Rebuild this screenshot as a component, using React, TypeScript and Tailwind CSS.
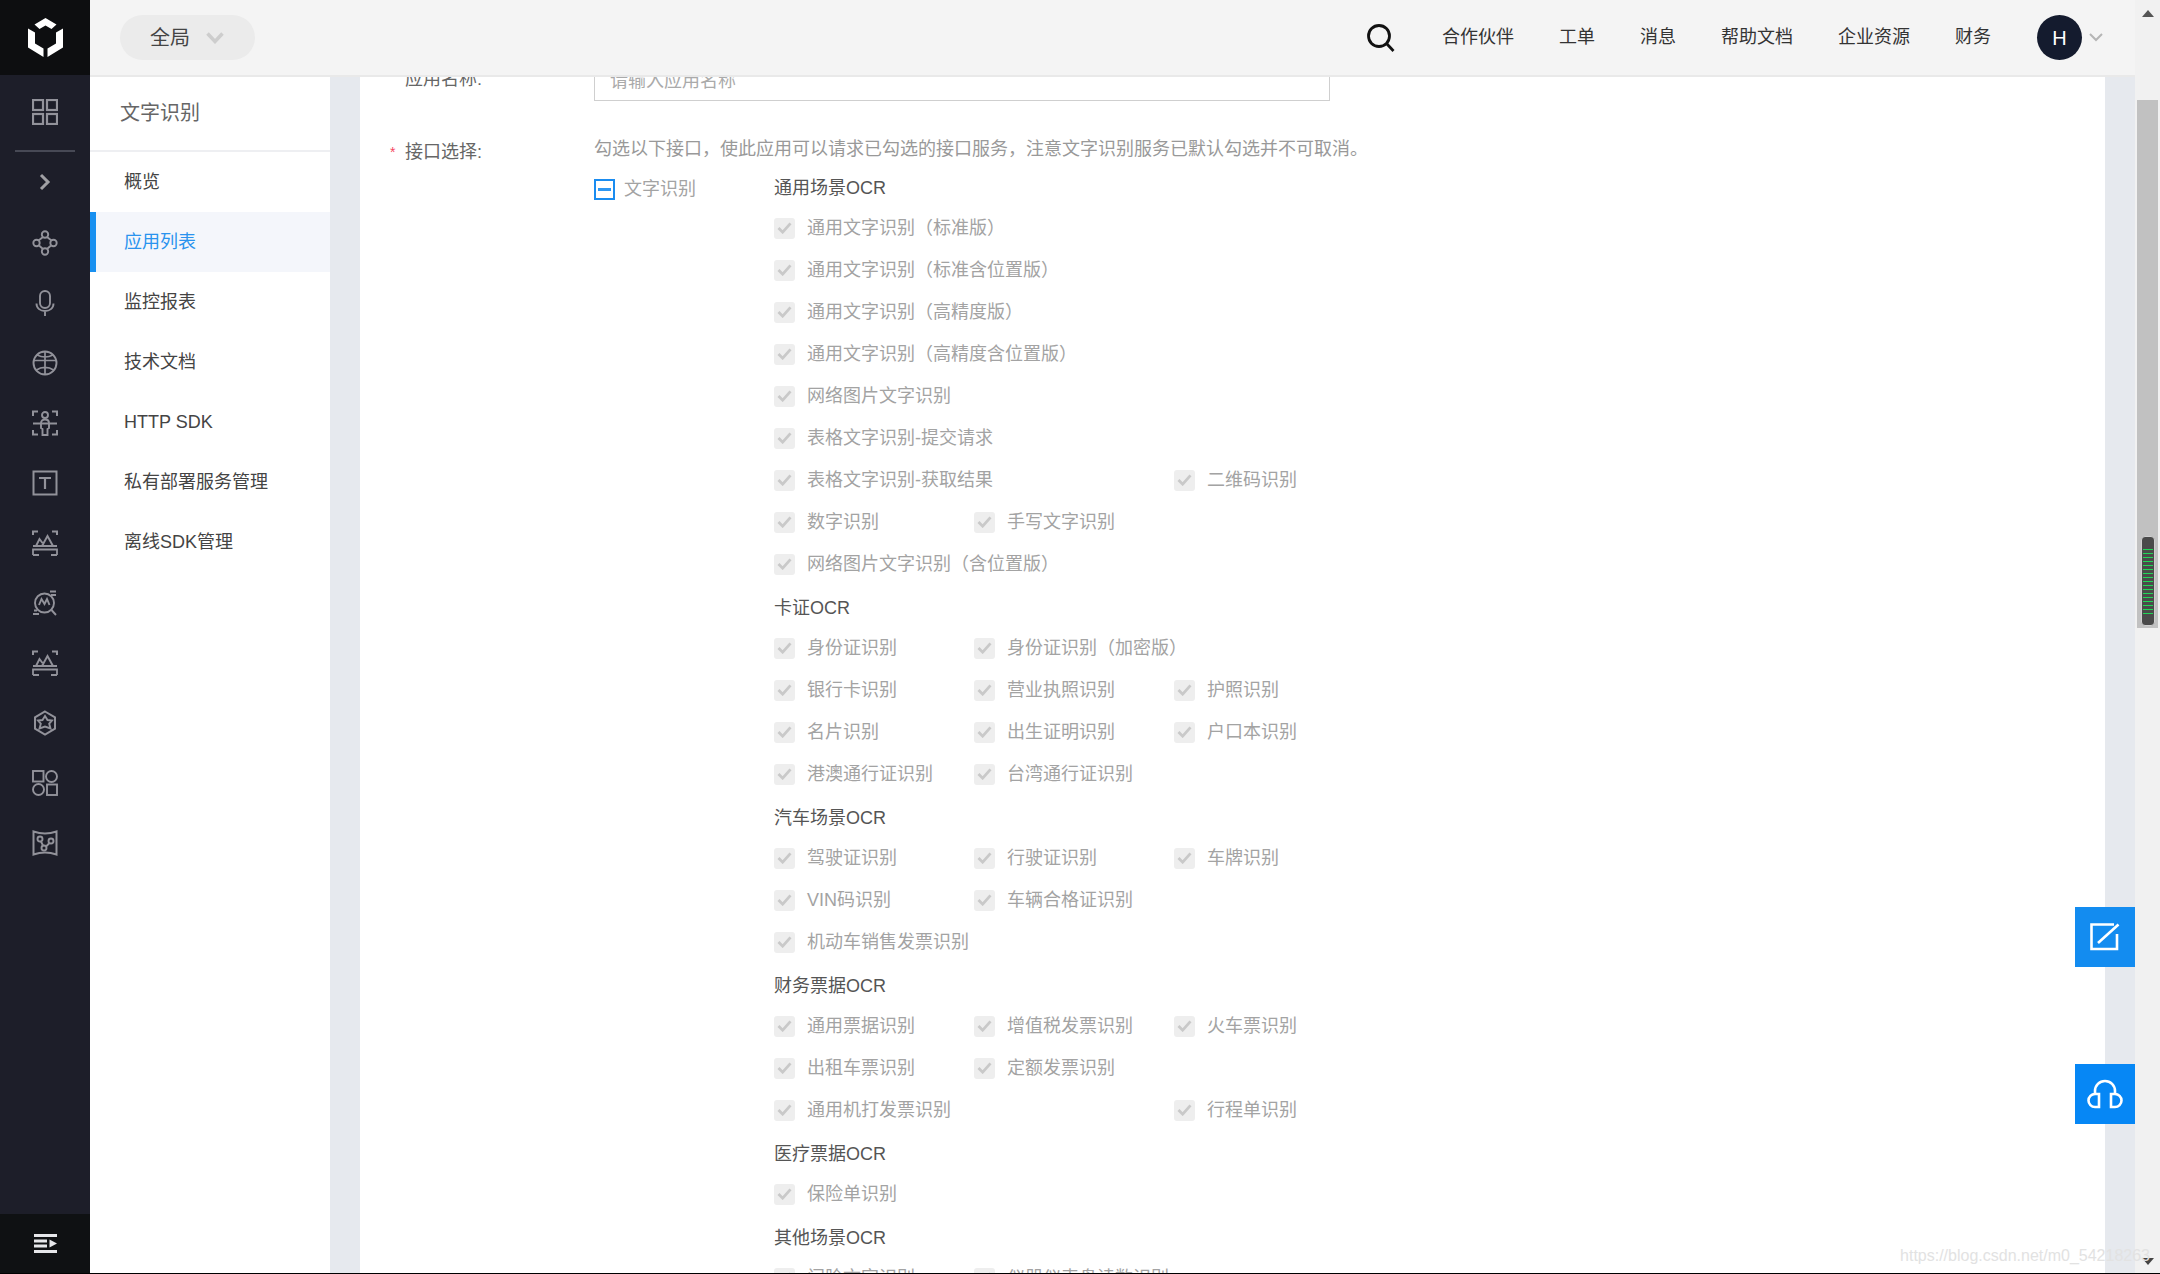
import type { ReactNode } from "react";

/*
  Console page: icon rail, product sub menu, top bar and the
  "create application" form with its list of OCR interfaces.
*/

const FONT = "font-['Liberation_Sans','Noto_Sans_CJK_SC',sans-serif]";

type Slot = string | null;
type Row = Slot[];

interface Section {
  title: string;
  rows: Row[];
}

const SECTIONS: Section[] = [
  {
    title: "通用场景OCR",
    rows: [
      ["通用文字识别（标准版）"],
      ["通用文字识别（标准含位置版）"],
      ["通用文字识别（高精度版）"],
      ["通用文字识别（高精度含位置版）"],
      ["网络图片文字识别"],
      ["表格文字识别-提交请求"],
      ["表格文字识别-获取结果", null, "二维码识别"],
      ["数字识别", "手写文字识别"],
      ["网络图片文字识别（含位置版）"],
    ],
  },
  {
    title: "卡证OCR",
    rows: [
      ["身份证识别", "身份证识别（加密版）"],
      ["银行卡识别", "营业执照识别", "护照识别"],
      ["名片识别", "出生证明识别", "户口本识别"],
      ["港澳通行证识别", "台湾通行证识别"],
    ],
  },
  {
    title: "汽车场景OCR",
    rows: [
      ["驾驶证识别", "行驶证识别", "车牌识别"],
      ["VIN码识别", "车辆合格证识别"],
      ["机动车销售发票识别"],
    ],
  },
  {
    title: "财务票据OCR",
    rows: [
      ["通用票据识别", "增值税发票识别", "火车票识别"],
      ["出租车票识别", "定额发票识别"],
      ["通用机打发票识别", null, "行程单识别"],
    ],
  },
  {
    title: "医疗票据OCR",
    rows: [["保险单识别"]],
  },
  {
    title: "其他场景OCR",
    rows: [["门脸文字识别", "仪器仪表盘读数识别"]],
  },
];

const MENU = ["概览", "应用列表", "监控报表", "技术文档", "HTTP SDK", "私有部署服务管理", "离线SDK管理"];

const TOP_LINKS = ["合作伙伴", "工单", "消息", "帮助文档", "企业资源", "财务"];

function RailIcon({ children }: { children: ReactNode }) {
  return (
    <svg
      viewBox="0 0 26 26"
      fill="none"
      stroke="#92929a"
      strokeWidth="1.9"
      className="w-[26px] h-[26px]"
    >
      {children}
    </svg>
  );
}

function ScanCorners() {
  return <path d="M1 6V1.500h5M20 1.500h5V6M1 20v4.500h5M20 24.500h5V20" strokeWidth="2" />;
}

function MountainScan() {
  return (
    <RailIcon>
      <path d="M1 5V1.500h5M20 1.500h5V5" strokeWidth="2" />
      <path d="M1 16h24M4 16l3.500-7 3 4M10 16l5.500-10 5.500 10" />
      <path d="M1 25v-5.500h24V25M1 25h6M19 25h6" strokeWidth="1.800" />
    </RailIcon>
  );
}

const RAIL_ICONS: ReactNode[] = [
  <RailIcon key="nodes">
    <circle cx="13" cy="4.500" r="3.200" />
    <circle cx="13" cy="21.500" r="3.200" />
    <circle cx="4.500" cy="13" r="3.200" />
    <circle cx="21.500" cy="13" r="3.200" />
    <path d="M11 7l-4.500 3.500M15 7l4.500 3.500M7 15.500l4 3.500M19 15.500l-4 3.500" />
  </RailIcon>,
  <RailIcon key="mic">
    <rect x="8" y="1" width="10" height="17" rx="5" />
    <path d="M4.500 13.500c0 5 4 7.500 8.500 7.500s8.500-2.500 8.500-7.500M13 21v5" />
  </RailIcon>,
  <RailIcon key="globe">
    <circle cx="13" cy="13" r="11.500" />
    <path d="M2 10.500h22M13 2v22M4.500 20c5-3.500 12-3.500 17 0M5 5c5 2.500 11 2.500 16 0" strokeWidth="1.700" />
  </RailIcon>,
  <RailIcon key="face">
    <ScanCorners />
    <circle cx="13" cy="5" r="3" />
    <path d="M1 13.500h24M9 18v-5c0-2 1.500-3.500 4-3.500s4 1.500 4 3.500v5l-1.500 1v6h-5v-6z" />
  </RailIcon>,
  <RailIcon key="text">
    <rect x="1.500" y="1.500" width="23" height="23" strokeWidth="2" />
    <path d="M7 8h12M13 8v11" strokeWidth="2.200" />
  </RailIcon>,
  <MountainScan key="scan-a" />,
  <RailIcon key="chart">
    <circle cx="12.500" cy="13" r="9.500" />
    <path d="M7 15l2.500-6 3 5 2.500-5 2.500 6M19.500 20l4.500 5M18 1.500h6M19 5h5M1 24h6M2 20.500h3" />
  </RailIcon>,
  <MountainScan key="scan-b" />,
  <RailIcon key="hexagon">
    <path d="M13 1.500l10 5.800v11.400l-10 5.800-10-5.800V7.300z" strokeWidth="2" />
    <path d="M13 6l2.500 4 4.500.500-2.800 3.200 1.300 4.800-5.500-2-5.500 2 1.300-4.800L6 10.500l4.500-.500z" />
  </RailIcon>,
  <RailIcon key="shapes">
    <rect x="1" y="1" width="10.500" height="10.500" />
    <circle cx="19.500" cy="6.500" r="5.500" />
    <circle cx="6.500" cy="19.500" r="5.500" />
    <rect x="15" y="14.500" width="10" height="10.500" />
  </RailIcon>,
  <RailIcon key="map">
    <path d="M1.500 1.500c7 2.500 16 2.500 23 0v23c-7-2.500-16-2.500-23 0z" strokeWidth="2" />
    <circle cx="8" cy="9" r="2.500" />
    <circle cx="12" cy="18" r="2.500" />
    <circle cx="19" cy="11" r="2.500" />
    <path d="M9 11.500l2 4M14 16.500l3.500-3.500" />
  </RailIcon>,
];

function Rail() {
  return (
    <aside className="w-[90px] shrink-0 flex flex-col bg-[#1d1e29]">
      <div className="h-[75px] bg-[#0d0e10] flex items-center justify-center">
        <svg viewBox="0 0 35 39" className="w-[35px] h-[39px]" fill="#fff">
          <path d="M17.500 0L28.500 6.500l-5 4.500-6-3.500-6 3.500-5-4.500z" />
          <path d="M0 10.500l7 4v11l8.500 5V39L0 29.500z" />
          <path d="M35 10.500l-7 4v11l-8.500 5V39L35 29.500z" />
        </svg>
      </div>
      <div className="h-[60px] mt-[7px] flex items-center justify-center">
        <RailIcon>
          <rect x="1" y="1" width="10" height="10" strokeWidth="2.200" />
          <rect x="15" y="1" width="10" height="10" strokeWidth="2.200" />
          <rect x="1" y="15" width="10" height="10" strokeWidth="2.200" />
          <rect x="15" y="15" width="10" height="10" strokeWidth="2.200" />
        </RailIcon>
      </div>
      <div className="h-[2px] mx-[15px] mt-[8px] bg-[#474955]" />
      <div className="h-[60px] flex items-center justify-center">
        <svg viewBox="0 0 12 18" className="w-[12px] h-[18px]" fill="none" stroke="#a0a0a4" strokeWidth="3">
          <path d="M2 2l7 7-7 7" />
        </svg>
      </div>
      <div className="mt-px flex-1">
        {RAIL_ICONS.map((icon, i) => (
          <div key={i} className="h-[60px] flex items-center justify-center">
            {icon}
          </div>
        ))}
      </div>
      <div className="h-[59px] bg-[#0f1113] flex items-center justify-center">
        <svg viewBox="0 0 23 19" className="w-[23px] h-[19px]" fill="#e6e7ea">
          <rect width="23" height="3" />
          <rect y="5.500" width="13" height="3" />
          <rect y="10.500" width="13" height="3" />
          <rect y="16" width="23" height="3" />
          <path d="M15.500 5.500l7.500 4-7.500 4z" />
        </svg>
      </div>
    </aside>
  );
}

function TopBar() {
  return (
    <header className="h-[77px] shrink-0 flex items-center bg-[#f4f4f4] border-b-2 border-[#e9e9e9]">
      <div className="ml-[30px] w-[135px] h-[45px] rounded-full bg-[#ebebeb] flex items-center pl-[30px] text-[20px] text-[#444]">
        全局
        <svg viewBox="0 0 18 12" className="ml-[16px] w-[18px] h-[12px]" fill="none" stroke="#cdcdcd" strokeWidth="3.500">
          <path d="M1.500 1.500L9 9.500l7.500-8" />
        </svg>
      </div>
      <svg viewBox="0 0 28 28" className="ml-auto w-[28px] h-[28px] mt-[1px]" fill="none" stroke="#111" strokeWidth="2.800">
        <circle cx="12" cy="12" r="10.500" />
        <path d="M19.500 19.500l7 7.500" />
      </svg>
      <nav className="ml-[47px] flex gap-[45px] text-[18px] text-[#333]">
        {TOP_LINKS.map((link) => (
          <span key={link}>{link}</span>
        ))}
      </nav>
      <div className="ml-[46px] w-[45px] h-[45px] rounded-full bg-[#141b2e] text-white text-[20px] flex items-center justify-center">
        H
      </div>
      <svg viewBox="0 0 14 9" className="ml-[7px] mr-[32px] w-[14px] h-[9px]" fill="none" stroke="#b5b5b5" strokeWidth="2">
        <path d="M1 1l6 6 6-6" />
      </svg>
    </header>
  );
}

function SubMenu() {
  return (
    <div className="w-[240px] shrink-0 bg-white">
      <div className="h-[75px] pl-[30px] pb-[2px] flex items-center border-b-2 border-[#eeeff2] text-[20px] text-[#666]">
        文字识别
      </div>
      <ul className="text-[18px] text-[#444]">
        {MENU.map((item) => {
          const active = item === "应用列表";
          return (
            <li
              key={item}
              className={
                active
                  ? "h-[60px] flex items-center pl-[28px] border-l-[6px] border-[#1890f0] bg-[#f4f6fb] text-[#2a93ee]"
                  : "h-[60px] flex items-center pl-[34px]"
              }
            >
              {item}
            </li>
          );
        })}
      </ul>
    </div>
  );
}

function DisabledCheck({ label }: { label: string }) {
  return (
    <label className="h-[42px] flex items-center whitespace-nowrap text-[18px] text-[#a3a3a3]">
      <span className="w-[21px] h-[21px] shrink-0 rounded-[3px] bg-[#eeeeee] flex items-center justify-center">
        <svg viewBox="0 0 16 13" className="w-[15px] h-[12px]" fill="none" stroke="#c9c9c9" strokeWidth="3">
          <path d="M1.500 6.500l4.500 4.500 8.500-9.500" />
        </svg>
      </span>
      <span className="ml-[12px]">{label}</span>
    </label>
  );
}

function InterfaceGroup({ section, first }: { section: Section; first: boolean }) {
  return (
    <section className={first ? "" : "mt-[4px]"}>
      <h3 className="h-[38px] flex items-center text-[18px] font-normal text-[#555]">
        {section.title}
      </h3>
      <div className="grid grid-cols-[repeat(3,200px)]">
        {section.rows.map((row, r) =>
          [0, 1, 2].map((c) =>
            row[c] ? (
              <DisabledCheck key={`${r}-${c}`} label={row[c] as string} />
            ) : (
              <span key={`${r}-${c}`} className="h-[42px]" />
            )
          )
        )}
      </div>
    </section>
  );
}

function AppForm() {
  return (
    <form className="-mt-[20px] bg-white text-[18px]">
      {/* application name */}
      <div className="flex">
        <div className="w-[234px] pl-[45px] pt-[10px] text-[#666] leading-[24px]">应用名称:</div>
        <div className="w-[736px] h-[44px] border border-t-0 border-[#cfcfcf] pl-[15px] pt-[5px] flex items-center text-[#aaa]">
          请输入应用名称
        </div>
      </div>

      {/* interface selection */}
      <div className="flex mt-[32px]">
        <div className="w-[234px] pl-[30px] pt-[7px] text-[#666] leading-[24px] flex">
          <span className="w-[15px] text-[#f5475f] text-[14px]">*</span>
          接口选择:
        </div>
        <div>
          <p className="h-[32px] mb-[4px] flex items-center text-[#999]">
            勾选以下接口，使此应用可以请求已勾选的接口服务，注意文字识别服务已默认勾选并不可取消。
          </p>
          <div className="flex">
            <div className="w-[180px] flex items-start pt-[10px] text-[#a3a3a3]">
              <span className="w-[21px] h-[21px] border-2 border-[#1a8cf0] bg-white flex items-center justify-center">
                <span className="w-[13px] h-[3px] bg-[#2e97f2]" />
              </span>
              <span className="ml-[9px] leading-[20px]">文字识别</span>
            </div>
            <div>
              {SECTIONS.map((section, i) => (
                <InterfaceGroup key={section.title} section={section} first={i === 0} />
              ))}
            </div>
          </div>
        </div>
      </div>
    </form>
  );
}

function FloatButtons() {
  return (
    <div className="absolute right-0 top-[830px] flex flex-col gap-[97px]">
      <button className="w-[60px] h-[60px] bg-[#138cf0] flex items-center justify-center">
        <svg viewBox="0 0 30 28" className="w-[30px] h-[28px]" fill="none" stroke="#fff" strokeWidth="2.600">
          <path d="M24 1.500H1.500v24.500h25.500V11" />
          <path d="M8 20L28.500 1.500" />
        </svg>
      </button>
      <button className="w-[60px] h-[60px] bg-[#0687f5] flex items-center justify-center">
        <svg viewBox="0 0 38 30" className="w-[38px] h-[30px]" fill="none" stroke="#fff" strokeWidth="2.600">
          <path d="M9 15V12a10 10 0 0 1 20 0v3" />
          <path d="M13 15v13H9a6.500 6.500 0 0 1 0-13zM25 15v13h4a6.500 6.500 0 0 0 0-13z" />
        </svg>
      </button>
    </div>
  );
}

function FakeScrollbar() {
  return (
    <div className="w-[25px] shrink-0 bg-[#f1f1f1] flex flex-col items-center">
      <svg viewBox="0 0 12 7" className="mt-[10px] w-[12px] h-[7px]" fill="#555">
        <path d="M6 0l6 7H0z" />
      </svg>
      <div className="mt-[83px] w-[21px] h-[528px] bg-[#c1c1c1] flex flex-col justify-end items-center pb-[2px]">
        <div className="w-[14px] h-[90px] rounded-[4px] bg-[#4a4a4a] border border-[#cfcfcf] flex flex-col justify-center gap-[3px] px-[1px]">
          {Array.from({ length: 17 }, (_, i) => (
            <div key={i} className="h-px bg-[#1fd655]" />
          ))}
        </div>
      </div>
      <svg viewBox="0 0 12 7" className="mt-auto mb-[8px] w-[12px] h-[7px]" fill="#444">
        <path d="M6 7l6-7H0z" />
      </svg>
    </div>
  );
}

export default function App() {
  return (
    <div className={`${FONT} relative h-screen flex overflow-hidden border-b border-black`}>
      <Rail />
      <div className="flex-1 min-w-0 flex flex-col">
        <TopBar />
        <div className="relative flex-1 min-h-0 flex">
          <SubMenu />
          <main className="flex-1 min-w-0 bg-[#e6e9ee] px-[30px] overflow-hidden">
            <AppForm />
          </main>
          <FloatButtons />
        </div>
      </div>
      <FakeScrollbar />
      <span className="absolute right-[10px] bottom-[5px] text-[16px] leading-[24px] text-[#e2e2e2]">
        https://blog.csdn.net/m0_54218263
      </span>
    </div>
  );
}
